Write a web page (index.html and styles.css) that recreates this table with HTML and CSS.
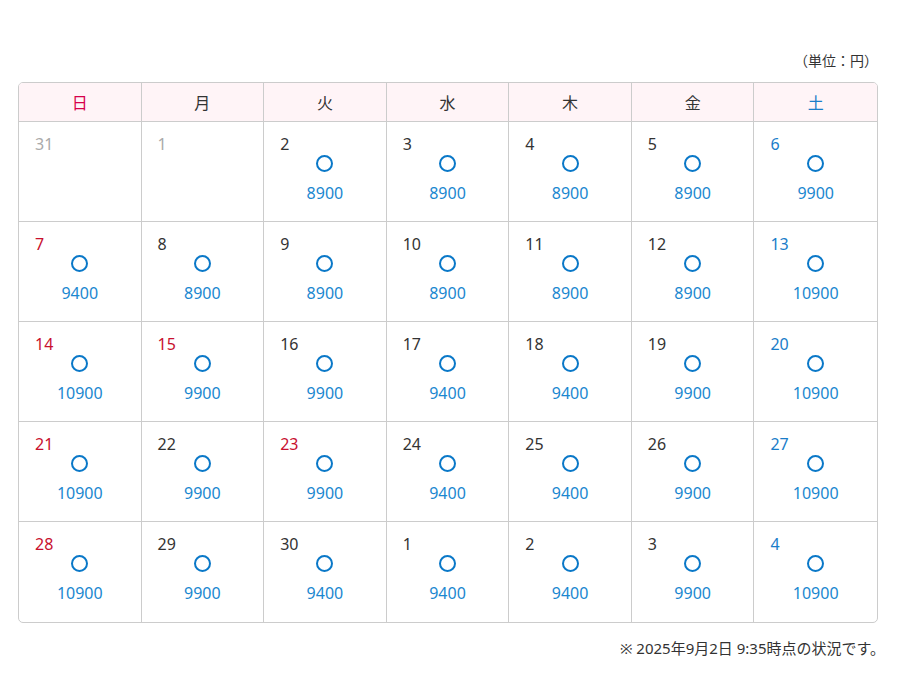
FILE: index.html
```html
<!DOCTYPE html>
<html lang="ja">
<head>
<meta charset="utf-8">
<title>カレンダー</title>
<link rel="stylesheet" href="styles.css">
</head>
<body>
<div class="wrap">
  <p class="unit">（単位：円）</p>
  <div class="cal">
    <div class="hd sun">日</div><div class="hd">月</div><div class="hd">火</div><div class="hd">水</div><div class="hd">木</div><div class="hd">金</div><div class="hd sat last">土</div>

    <div class="c"><span class="d muted">31</span></div>
    <div class="c"><span class="d muted">1</span></div>
    <div class="c"><span class="d">2</span><i class="mk"></i><span class="p">8900</span></div>
    <div class="c"><span class="d">3</span><i class="mk"></i><span class="p">8900</span></div>
    <div class="c"><span class="d">4</span><i class="mk"></i><span class="p">8900</span></div>
    <div class="c"><span class="d">5</span><i class="mk"></i><span class="p">8900</span></div>
    <div class="c last"><span class="d sat">6</span><i class="mk"></i><span class="p">9900</span></div>

    <div class="c"><span class="d red">7</span><i class="mk"></i><span class="p">9400</span></div>
    <div class="c"><span class="d">8</span><i class="mk"></i><span class="p">8900</span></div>
    <div class="c"><span class="d">9</span><i class="mk"></i><span class="p">8900</span></div>
    <div class="c"><span class="d">10</span><i class="mk"></i><span class="p">8900</span></div>
    <div class="c"><span class="d">11</span><i class="mk"></i><span class="p">8900</span></div>
    <div class="c"><span class="d">12</span><i class="mk"></i><span class="p">8900</span></div>
    <div class="c last"><span class="d sat">13</span><i class="mk"></i><span class="p">10900</span></div>

    <div class="c"><span class="d red">14</span><i class="mk"></i><span class="p">10900</span></div>
    <div class="c"><span class="d red">15</span><i class="mk"></i><span class="p">9900</span></div>
    <div class="c"><span class="d">16</span><i class="mk"></i><span class="p">9900</span></div>
    <div class="c"><span class="d">17</span><i class="mk"></i><span class="p">9400</span></div>
    <div class="c"><span class="d">18</span><i class="mk"></i><span class="p">9400</span></div>
    <div class="c"><span class="d">19</span><i class="mk"></i><span class="p">9900</span></div>
    <div class="c last"><span class="d sat">20</span><i class="mk"></i><span class="p">10900</span></div>

    <div class="c"><span class="d red">21</span><i class="mk"></i><span class="p">10900</span></div>
    <div class="c"><span class="d">22</span><i class="mk"></i><span class="p">9900</span></div>
    <div class="c"><span class="d red">23</span><i class="mk"></i><span class="p">9900</span></div>
    <div class="c"><span class="d">24</span><i class="mk"></i><span class="p">9400</span></div>
    <div class="c"><span class="d">25</span><i class="mk"></i><span class="p">9400</span></div>
    <div class="c"><span class="d">26</span><i class="mk"></i><span class="p">9900</span></div>
    <div class="c last"><span class="d sat">27</span><i class="mk"></i><span class="p">10900</span></div>

    <div class="c bot"><span class="d red">28</span><i class="mk"></i><span class="p">10900</span></div>
    <div class="c bot"><span class="d">29</span><i class="mk"></i><span class="p">9900</span></div>
    <div class="c bot"><span class="d">30</span><i class="mk"></i><span class="p">9400</span></div>
    <div class="c bot"><span class="d">1</span><i class="mk"></i><span class="p">9400</span></div>
    <div class="c bot"><span class="d">2</span><i class="mk"></i><span class="p">9400</span></div>
    <div class="c bot"><span class="d">3</span><i class="mk"></i><span class="p">9900</span></div>
    <div class="c bot last"><span class="d sat">4</span><i class="mk"></i><span class="p">10900</span></div>
  </div>
  <p class="note">※ 2025年9月2日 9:35時点の状況です。</p>
</div>
</body>
</html>
```

FILE: styles.css
```css
* { box-sizing: border-box; }
html, body { margin: 0; padding: 0; background: #fff; }
body {
  font-family: "Noto Sans", "Noto Sans CJK JP", sans-serif;
  color: #333;
}
.wrap {
  width: 860px;
  margin: 0 0 0 18px;
  padding-top: 51px;
}
.unit {
  margin: 0 0 11px;
  text-align: right;
  font-size: 14px;
  line-height: 20px;
}
.cal {
  display: grid;
  grid-template-columns: repeat(7, 1fr);
  grid-template-rows: 39px repeat(5, 100px);
  border: 1px solid #ccc;
  border-radius: 5px;
  overflow: hidden;
}
.hd {
  background: #fff4f7;
  border-right: 1px solid #ccc;
  border-bottom: 1px solid #ccc;
  display: flex;
  align-items: center;
  justify-content: center;
  font-size: 16px;
  font-family: "Noto Sans CJK JP", sans-serif;
  color: #333;
}
.hd.sun { color: #d6004b; }
.hd.sat { color: #1a7dc9; }
.c {
  border-right: 1px solid #ccc;
  border-bottom: 1px solid #ccc;
  padding: 10px 16px 0;
  display: flex;
  flex-direction: column;
  align-items: center;
}
.c.last, .hd.last { border-right: none; }
.c.bot { border-bottom: none; }
.d {
  align-self: flex-start;
  font-size: 16px;
  line-height: 24px;
  color: #333;
}
.d.muted { color: #aaa; }
.d.red { color: #c8102e; }
.d.sat { color: #1a7dc9; }
.mk {
  display: block;
  width: 17px;
  height: 17px;
  margin-top: -1px;
  border: 2px solid #0a78c8;
  border-radius: 50%;
}
.p {
  margin-top: 9px;
  font-size: 16px;
  line-height: 24px;
  color: #1a87d0;
}
.note {
  margin: 13px -7px 0 0;
  text-align: right;
  font-size: 15px;
  line-height: 24px;
}
```
